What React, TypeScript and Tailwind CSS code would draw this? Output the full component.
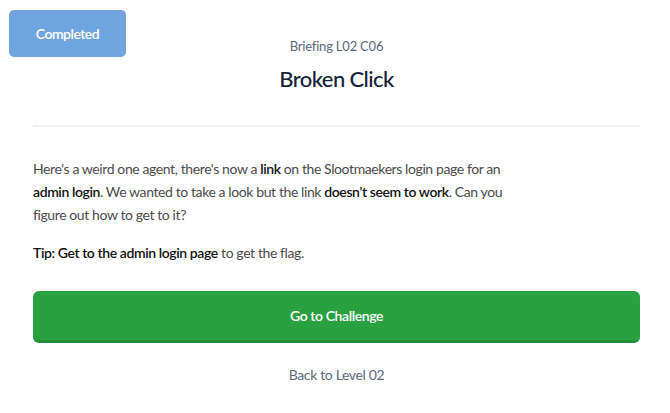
import React from "react";

const Strong = ({ children }: { children: React.ReactNode }) => (
  <span className="font-semibold text-[#111]">{children}</span>
);

export default function App() {
  return (
    <div className="relative w-[670px] h-[413px] bg-white font-['Lato',sans-serif] overflow-hidden">
      {/* status badge */}
      <div className="absolute left-[9px] top-[10px] w-[117px] h-[47px] rounded-[5px] bg-[#6fa5dc] flex items-center justify-center text-white text-[14px] tracking-[-0.5px] font-semibold">
        Completed
      </div>

      <div className="flex flex-col pl-[33px] pr-[30px] pt-[36px]">
        <div className="text-center text-[13px] tracking-[-0.2px] leading-[20px] text-[#5b687a]">Briefing L02 C06</div>
        <h1 className="mt-[8px] text-center text-[22px] tracking-[-0.6px] leading-[30px] font-medium text-[#14233a]">
          Broken Click
        </h1>

        <div className="mt-[31px] h-[2px] bg-[#eef1f5]" />

        <div className="text-[14px] tracking-[-0.4px] leading-[23px] text-[#4b4b4b]">
          <p className="mt-[30px] w-[490px]">
            Here's a weird one agent, there's now a <Strong>link</Strong> on the Slootmaekers login page for an{" "}
            <Strong>admin login</Strong>. We wanted to take a look but the link <Strong>doesn't seem to work</Strong>. Can
            you figure out how to get to it?
          </p>
          <p className="mt-[15px]">
            <Strong>Tip: Get to the admin login page</Strong> to get the flag.
          </p>
        </div>

        <button className="mt-[27px] h-[52px] rounded-[6px] bg-[#2aa141] border-b-[3px] border-[#22913a] text-white text-[14px] tracking-[-0.4px] font-semibold">
          Go to Challenge
        </button>

        <div className="mt-[22px] text-center text-[14px] tracking-[-0.35px] leading-[20px] text-[#5b687a]">
          Back to Level 02
        </div>
      </div>
    </div>
  );
}
